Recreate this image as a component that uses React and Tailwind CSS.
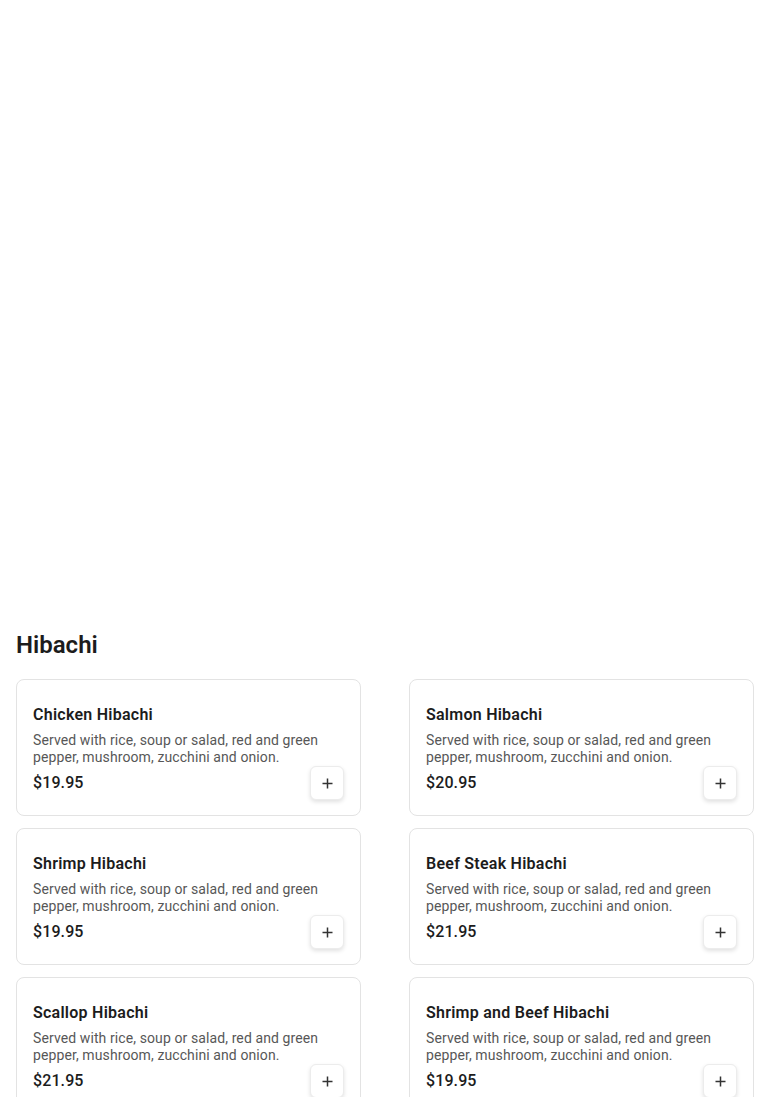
const items = [
  { name: 'Chicken Hibachi', price: '$19.95' },
  { name: 'Salmon Hibachi', price: '$20.95' },
  { name: 'Shrimp Hibachi', price: '$19.95' },
  { name: 'Beef Steak Hibachi', price: '$21.95' },
  { name: 'Scallop Hibachi', price: '$21.95' },
  { name: 'Shrimp and Beef Hibachi', price: '$19.95' },
];

function MenuCard({ name, price }) {
  return (
    <div className="border border-[#e3e3e3] rounded-lg bg-white px-4 pt-[23px] pb-[15px] flex flex-col">
      <h3 className="text-base leading-6 font-semibold text-[#1c1c1c] tracking-[0.25px]">{name}</h3>
      <p className="mt-[5px] text-sm leading-[17px] text-[#575757] tracking-[0.1px]">
        Served with rice, soup or salad, red and green pepper, mushroom, zucchini and onion.
      </p>
      <div className="flex items-center justify-between">
        <span className="text-base font-medium text-[#1c1c1c] tracking-[0.1px]">{price}</span>
        <button className="w-[34px] h-[34px] rounded-md bg-white border border-[#ececec] shadow-[0_2px_4px_rgba(0,0,0,0.12)] flex items-center justify-center text-[#333]">
          <svg width="11" height="11" viewBox="0 0 11 11">
            <path d="M5.5 0.5v10M0.5 5.5h10" stroke="currentColor" strokeWidth="1.5" />
          </svg>
        </button>
      </div>
    </div>
  );
}

export default function App() {
  return (
    <div className="min-h-screen bg-white font-['Roboto',sans-serif] px-4 pt-[629px] w-[770px]">
      <h2 className="text-2xl leading-8 font-semibold text-[#1c1c1c]">Hibachi</h2>
      <div className="mt-[18px] grid grid-cols-2 gap-x-12 gap-y-3">
        {items.map((it) => (
          <MenuCard key={it.name} {...it} />
        ))}
      </div>
    </div>
  );
}
